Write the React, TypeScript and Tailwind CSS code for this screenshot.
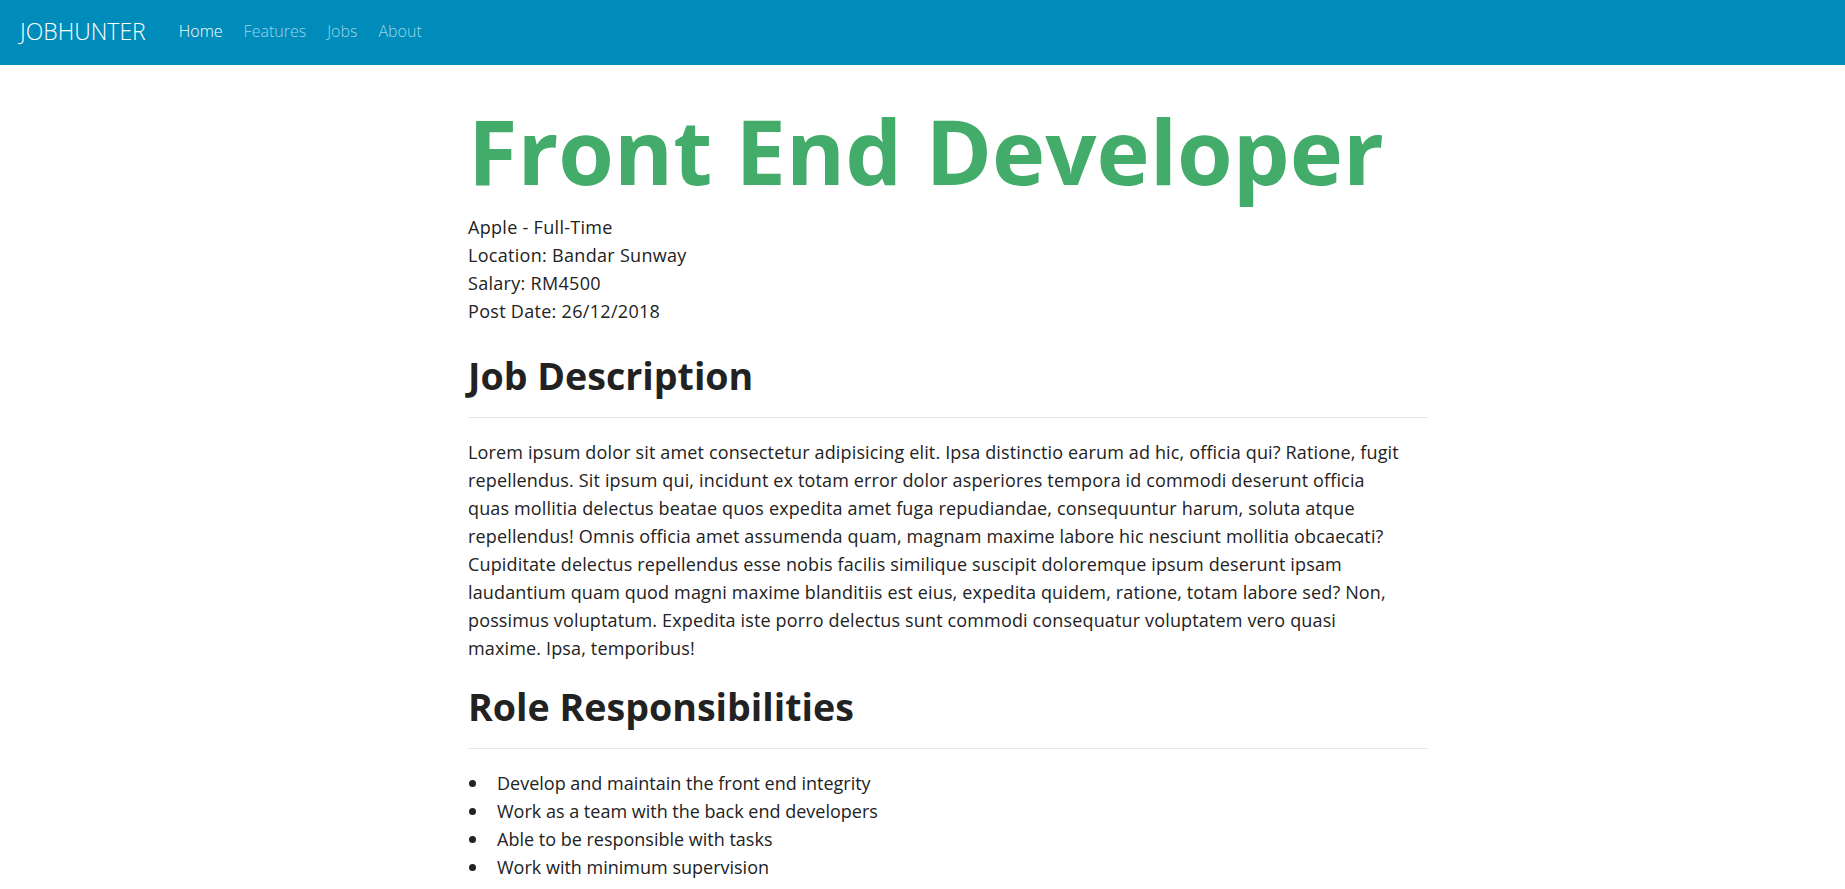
import React from 'react';

const navLinks = [
  { label: 'Home', active: true },
  { label: 'Features', active: false },
  { label: 'Jobs', active: false },
  { label: 'About', active: false },
];

// broken the same way as the original page wraps them
const descriptionLines = [
  'Lorem ipsum dolor sit amet consectetur adipisicing elit. Ipsa distinctio earum ad hic, officia qui? Ratione, fugit',
  'repellendus. Sit ipsum qui, incidunt ex totam error dolor asperiores tempora id commodi deserunt officia',
  'quas mollitia delectus beatae quos expedita amet fuga repudiandae, consequuntur harum, soluta atque',
  'repellendus! Omnis officia amet assumenda quam, magnam maxime labore hic nesciunt mollitia obcaecati?',
  'Cupiditate delectus repellendus esse nobis facilis similique suscipit doloremque ipsum deserunt ipsam',
  'laudantium quam quod magni maxime blanditiis est eius, expedita quidem, ratione, totam labore sed? Non,',
  'possimus voluptatum. Expedita iste porro delectus sunt commodi consequatur voluptatem vero quasi',
  'maxime. Ipsa, temporibus!',
];

const responsibilities = [
  'Develop and maintain the front end integrity',
  'Work as a team with the back end developers',
  'Able to be responsible with tasks',
  'Work with minimum supervision',
];

function Navbar() {
  return (
    <header className="h-[65px] bg-[#008cba] flex items-center pl-[20px] pb-[3px]">
      <a href="#" className="text-[23px] font-light text-white mr-[33px]">
        JOBHUNTER
      </a>
      <nav className="flex items-center gap-[21px]">
        {navLinks.map((link) => (
          <a
            key={link.label}
            href="#"
            className={`text-[16px] font-light ${link.active ? 'text-white' : 'text-[#9dd3e6]'}`}
          >
            {link.label}
          </a>
        ))}
      </nav>
    </header>
  );
}

function SectionTitle({ children }: { children: React.ReactNode }) {
  return (
    <>
      <h2 className="text-[37.6px] font-bold leading-[1.2] text-[#222]">{children}</h2>
      <hr className="mt-[19px] border-t border-[#e6e6e6]" />
    </>
  );
}

export default function App() {
  return (
    <div className="min-h-screen bg-white font-['Open_Sans',sans-serif] text-[#222]">
      <Navbar />
      <main className="ml-[468px] w-[960px] pt-[31px] text-[18px] leading-[28px]">
        <h1 className="text-[90px] font-bold leading-[1.2] text-[#43ac6a]">Front End Developer</h1>
        <div className="mt-[9px] tracking-[0.3px]">
          <p>Apple - Full-Time</p>
          <p>Location: Bandar Sunway</p>
          <p>Salary: RM4500</p>
          <p>Post Date: 26/12/2018</p>
        </div>

        <section className="mt-[28px]">
          <SectionTitle>Job Description</SectionTitle>
          <p className="mt-[20px] tracking-[0.15px]">
            {descriptionLines.map((line, i) => (
              <React.Fragment key={i}>
                {line}
                {i < descriptionLines.length - 1 && <br />}
              </React.Fragment>
            ))}
          </p>
        </section>

        <section className="mt-[22px] pb-[20px]">
          <SectionTitle>Role Responsibilities</SectionTitle>
          <ul className="mt-[20px]">
            {responsibilities.map((item) => (
              <li key={item} className="flex items-center">
                <span className="w-[29px] flex">
                  <span className="ml-[1px] h-[7px] w-[7px] rounded-full bg-[#222]" />
                </span>
                {item}
              </li>
            ))}
          </ul>
        </section>
      </main>
    </div>
  );
}
